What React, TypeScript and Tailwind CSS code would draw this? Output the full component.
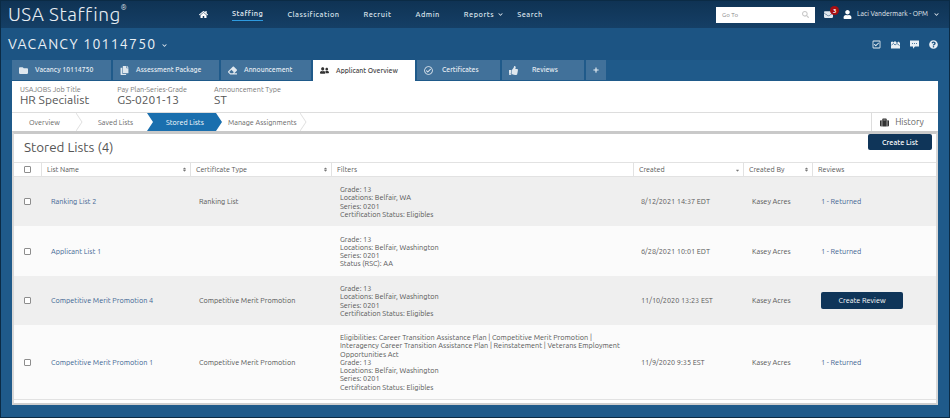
import { FaHome, FaChevronDown, FaSearch, FaEnvelope, FaUser, FaRegCheckSquare, FaFolder, FaQuestionCircle, FaCopy, FaEraser, FaUserFriends, FaRegCheckCircle, FaThumbsUp, FaPlus, FaSuitcase, FaSort, FaSortDown } from 'react-icons/fa'

const font = { fontFamily: 'Ubuntu, "Noto Sans", sans-serif' }

const navItems = ['Staffing', 'Classification', 'Recruit', 'Admin']

const columns = 'grid-cols-[27px_149px_141px_302px_110px_69px_1fr]'

function Tab({ icon, label, width, active, labelClass }: { icon: React.ReactNode; label: string; width: string; active?: boolean; labelClass?: string }) {
  return (
    <div
      className={`flex items-center text-[6.9px] font-medium ${width} ${
        active ? 'h-[21px] bg-white text-[#444]' : 'h-[20px] bg-[#41719a] text-[#e6edf3]'
      }`}
    >
      <span className={`flex w-[22px] justify-center pl-[1px] text-[9px] ${active ? 'text-[#333]' : 'text-[#dfe7ee]'}`}>{icon}</span>
      <span className={`pt-[1px] ${labelClass ?? 'ml-[1px]'}`}>{label}</span>
    </div>
  )
}

function Checkbox() {
  return <span className="block h-[7px] w-[7px] rounded-[1px] border border-[#8d8d8d] bg-white" />
}

function HeaderCell({ label, sort }: { label: string; sort?: 'both' | 'down' }) {
  return (
    <div className="flex items-center justify-between border-l border-[#e2e2e2] pl-[5px] pr-[3px]">
      <span>{label}</span>
      {sort === 'both' && <FaSort className="text-[5px] text-[#777]" />}
      {sort === 'down' && <FaSortDown className="text-[5px] text-[#777]" />}
    </div>
  )
}

function Row({
  name,
  cert,
  filters,
  created,
  review,
  height,
  shaded,
}: {
  name: string
  cert: string
  filters: React.ReactNode
  created: string
  review?: string
  height: string
  shaded?: boolean
}) {
  return (
    <div className={`grid ${columns} items-center text-[7.3px] leading-[8.2px] text-[#555] ${height} ${shaded ? 'bg-[#efefef]' : 'bg-[#fbfbfb]'}`}>
      <div className="flex justify-center">
        <Checkbox />
      </div>
      <div className="pl-[10px] text-[#3c6391]">{name}</div>
      <div className="pl-[9px]">{cert}</div>
      <div className="pl-[9px] pr-[6px]">{filters}</div>
      <div className="pl-[8px]">{created}</div>
      <div className="pl-[9px]">Kasey Acres</div>
      <div className="pl-[9px]">
        {review ? (
          <span className="text-[#3c6391]">{review}</span>
        ) : (
          <button className="h-[17px] w-[82px] rounded-[2px] bg-[#0f3559] text-[7.3px] text-white">Create Review</button>
        )}
      </div>
    </div>
  )
}

function Chevron() {
  return (
    <svg width="7" height="18" viewBox="0 0 7 18" className="shrink-0">
      <path d="M0 0L6 9L0 18" fill="none" stroke="#d8d8d8" strokeWidth="0.8" />
    </svg>
  )
}

export default function App() {
  return (
    <div style={font} className="flex h-[418px] w-[950px] flex-col overflow-hidden border border-[#0b2b45] bg-[#1f5a8a]">
      {/* Top nav */}
      <div className="flex h-[27px] shrink-0 items-center bg-gradient-to-b from-[#0f3354] to-[#153f66] text-white">
        <div className="ml-[7px] flex w-[191px] items-start text-[19px] font-light leading-none tracking-[0.5px] text-[#e8eef3]">
          USA Staffing
          <span className="mt-[-1px] text-[7px]">®</span>
        </div>
        <FaHome className="text-[9px]" />
        <div className="ml-[24px] flex items-center gap-[24px] text-[7.4px] font-medium tracking-[0.5px] text-[#dbe4ec]">
          {navItems.map((item, i) => (
            <span key={item} className={i === 0 ? 'border-b border-[#2e9be0] text-[#e9f0f5]' : ''}>
              {item}
            </span>
          ))}
          <span className="flex items-center gap-[4px]">
            Reports <FaChevronDown className="text-[5px]" />
          </span>
          <span className="ml-[-10px]">Search</span>
        </div>
        <div className="ml-auto flex h-[16px] w-[99px] items-center justify-between bg-white px-[6px] text-[6.2px] text-[#888]">
          Go To
          <FaSearch className="text-[7px] text-[#c8c8c8]" />
        </div>
        <div className="relative ml-[9px]">
          <FaEnvelope className="text-[9px] text-[#e3eaf0]" />
          <span className="absolute -right-[6px] -top-[4px] flex h-[9px] w-[9px] items-center justify-center rounded-full bg-[#a80f12] text-[6px] font-bold text-white">3</span>
        </div>
        <FaUser className="ml-[10px] text-[9px] text-white" />
        <span className="ml-[5px] text-[6.8px] text-[#e3eaf0]">Laci Vandermark - OPM</span>
        <FaChevronDown className="ml-[6px] mr-[10px] text-[5px] text-[#e3eaf0]" />
      </div>

      {/* Vacancy title */}
      <div className="flex h-[32px] shrink-0 items-center bg-[#1c5483] pl-[7px] pr-[11px] text-[#e9eff4]">
        <span className="text-[14px] leading-none tracking-[1.25px]">VACANCY 10114750</span>
        <FaChevronDown className="ml-[6px] mt-[2px] text-[5px]" />
        <div className="ml-auto flex items-center gap-[10px] text-[9px]">
          <FaRegCheckSquare />
          <svg width="9" height="9" viewBox="0 0 9 9" fill="currentColor">
            <path d="M0 2V8.5H9V3L7.5 1.5L6 3L4 1L2.5 2.5L1.5 1.5Z" />
            <path d="M0.5 5L2.5 3.5L4 5L6 3.5L8.5 5.5" fill="none" stroke="#1c5483" strokeWidth="0.7" />
          </svg>
          <svg width="9" height="9" viewBox="0 0 9 9" fill="currentColor">
            <path d="M0 0.5H9V6.5H5L3 8.8V6.5H0Z" />
            <circle cx="2.5" cy="3.5" r="0.5" fill="#1c5483" />
            <circle cx="4.5" cy="3.5" r="0.5" fill="#1c5483" />
            <circle cx="6.5" cy="3.5" r="0.5" fill="#1c5483" />
          </svg>
          <FaQuestionCircle />
        </div>
      </div>

      {/* Tabs */}
      <div className="flex h-[21px] shrink-0 items-start gap-[2px] pl-[11px]">
        <Tab icon={<FaFolder />} label="Vacancy 10114750" width="w-[99px]" />
        <Tab icon={<FaCopy />} label="Assessment Package" width="w-[106px]" />
        <Tab icon={<FaEraser />} label="Announcement" width="w-[90px]" />
        <Tab icon={<FaUserFriends />} label="Applicant Overview" width="w-[102px]" active />
        <Tab icon={<FaRegCheckCircle />} label="Certificates" width="w-[83px]" labelClass="ml-[3px]" />
        <Tab icon={<FaThumbsUp />} label="Reviews" width="w-[82px]" labelClass="ml-[8px]" />
        <div className="flex h-[20px] w-[20px] items-center justify-center bg-[#41719a] text-[6px] text-[#e6edf3]">
          <FaPlus />
        </div>
      </div>

      {/* Panel */}
      <div className="ml-[11px] mr-[11px] flex h-[324px] shrink-0 flex-col bg-white">
        <div className="flex h-[31px] shrink-0 gap-[27px] pl-[8px] pt-[5px] text-[#555]">
          <div className="mr-[1px]">
            <div className="text-[7.2px] leading-[7px] text-[#777]">USAJOBS Job Title</div>
            <div className="text-[12px] leading-[14px]">HR Specialist</div>
          </div>
          <div>
            <div className="text-[7.2px] leading-[7px] text-[#777]">Pay Plan-Series-Grade</div>
            <div className="text-[12px] leading-[14px]">GS-0201-13</div>
          </div>
          <div>
            <div className="text-[7.2px] leading-[7px] text-[#777]">Announcement Type</div>
            <div className="text-[12px] leading-[14px]">ST</div>
          </div>
        </div>

        {/* Steps */}
        <div className="flex h-[19px] shrink-0 items-stretch border-t border-[#ddd] text-[7.2px] text-[#666]">
          <div className="flex w-[64px] items-center pl-[17px]">Overview</div>
          <Chevron />
          <div className="flex w-[64px] items-center pl-[15px]">Saved Lists</div>
          <div className="flex w-[75px] items-center bg-[#1a6fae] pl-[19px] text-white [clip-path:polygon(0_0,92%_0,100%_50%,92%_100%,0_100%,8%_50%)]">
            Stored Lists
          </div>
          <div className="flex w-[78px] items-center pl-[6px]">Manage Assignments</div>
          <Chevron />
          <div className="ml-auto flex w-[67px] items-center justify-center gap-[6px] border-l border-[#ddd] pr-[6px] pt-[1px] text-[8.9px] text-[#666]">
            <FaSuitcase className="text-[9px] text-[#333]" />
            History
          </div>
        </div>

        <div className="flex min-h-0 flex-1 flex-col border-x-2 border-b-2 border-t-[3px] border-x-[#d8d8d8] border-b-[#cfcfcf] border-t-[#c9c9c9]">
          <div className="flex h-[28px] shrink-0 items-center justify-between pl-[10px] pr-[4px]">
            <span className="text-[13.4px] text-[#555]">Stored Lists (4)</span>
            <button className="mt-[-12px] h-[16px] w-[64px] rounded-[2px] bg-[#0f3559] text-[7.3px] font-medium text-white">Create List</button>
          </div>

          <div className={`grid h-[15px] shrink-0 ${columns} border-y border-[#e2e2e2] text-[7.2px] text-[#555]`}>
            <div className="flex items-center justify-center">
              <Checkbox />
            </div>
            <HeaderCell label="List Name" sort="both" />
            <HeaderCell label="Certificate Type" sort="both" />
            <HeaderCell label="Filters" />
            <HeaderCell label="Created" sort="down" />
            <HeaderCell label="Created By" sort="both" />
            <HeaderCell label="Reviews" />
          </div>

          <Row
            shaded
            height="h-[49px]"
            name="Ranking List 2"
            cert="Ranking List"
            created="8/12/2021 14:37 EDT"
            review="1 - Returned"
            filters={
              <>
                Grade: 13
                <br />
                Locations: Belfair, WA
                <br />
                Series: 0201
                <br />
                Certification Status: Eligibles
              </>
            }
          />
          <Row
            height="h-[50px]"
            name="Applicant List 1"
            cert=""
            created="6/28/2021 10:01 EDT"
            review="1 - Returned"
            filters={
              <>
                Grade: 13
                <br />
                Locations: Belfair, Washington
                <br />
                Series: 0201
                <br />
                Status (RSC): AA
              </>
            }
          />
          <Row
            shaded
            height="h-[49px]"
            name="Competitive Merit Promotion 4"
            cert="Competitive Merit Promotion"
            created="11/10/2020 13:23 EST"
            filters={
              <>
                Grade: 13
                <br />
                Locations: Belfair, Washington
                <br />
                Series: 0201
                <br />
                Certification Status: Eligibles
              </>
            }
          />
          <Row
            height="h-[74px]"
            name="Competitive Merit Promotion 1"
            cert="Competitive Merit Promotion"
            created="11/9/2020 9:35 EST"
            review="1 - Returned"
            filters={
              <>
                Eligibilities: Career Transition Assistance Plan | Competitive Merit Promotion |
                <br />
                Interagency Career Transition Assistance Plan | Reinstatement | Veterans Employment
                <br />
                Opportunities Act
                <br />
                Grade: 13
                <br />
                Locations: Belfair, Washington
                <br />
                Series: 0201
                <br />
                Certification Status: Eligibles
              </>
            }
          />
          <div className="flex-1 border-t border-[#e2e2e2]" />
        </div>
      </div>
    </div>
  )
}
